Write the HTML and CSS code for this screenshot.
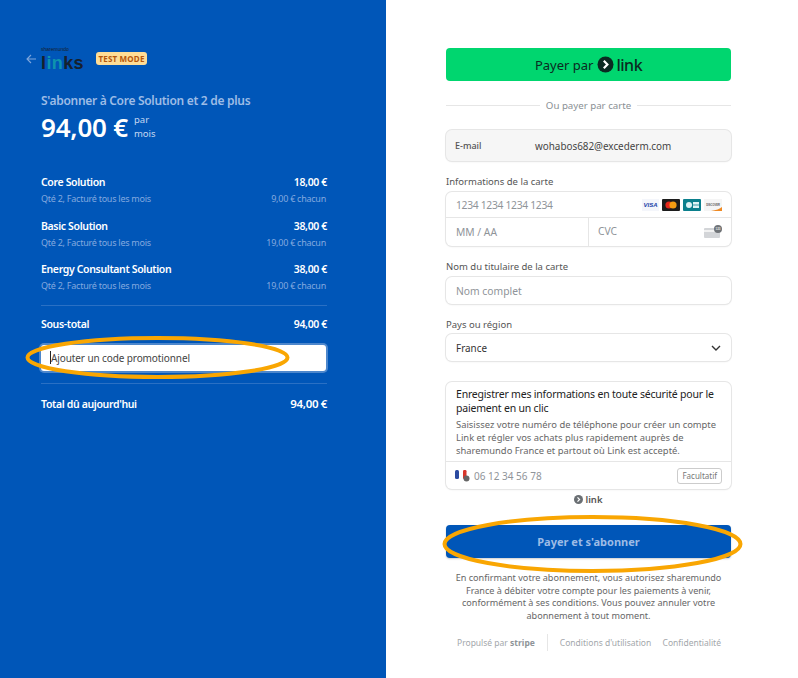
FILE: index.html
```html
<!DOCTYPE html>
<html lang="fr">
<head>
    <meta charset="UTF-8">
    <meta name="viewport" content="width=device-width, initial-scale=1.0">
    <title>S'abonner à Core Solution</title>
    <link rel="stylesheet" href="styles.css">
</head>
<body>

<div class="page">
    <!-- summary -->
    <div class="summary">
        <div class="brand">
            <svg class="back" width="10" height="10" viewBox="0 0 10 10"><path d="M5 1 1 5l4 4M1 5h9" fill="none" stroke="#7fa6dc" stroke-width="1.1"/></svg>
            <div class="logo">
                <span class="logo-top">sharemundo</span>
                <span class="logo-main">l<span class="teal">in</span>ks</span>
            </div>
            <span class="badge">TEST MODE</span>
        </div>

        <div class="plan-title">S'abonner à Core Solution et 2 de plus</div>
        <div class="price">
            <span class="amount">94,00 €</span>
            <span class="period">par<br>mois</span>
        </div>

        <div class="line">
            <div class="line-top"><span>Core Solution</span><span>18,00 €</span></div>
            <div class="line-sub"><span>Qté 2, Facturé tous les mois</span><span>9,00 € chacun</span></div>
        </div>
        <div class="line">
            <div class="line-top"><span>Basic Solution</span><span>38,00 €</span></div>
            <div class="line-sub"><span>Qté 2, Facturé tous les mois</span><span>19,00 € chacun</span></div>
        </div>
        <div class="line">
            <div class="line-top"><span>Energy Consultant Solution</span><span>38,00 €</span></div>
            <div class="line-sub"><span>Qté 2, Facturé tous les mois</span><span>19,00 € chacun</span></div>
        </div>

        <div class="rule rule-a"></div>
        <div class="line-top subtotal"><span>Sous-total</span><span>94,00 €</span></div>
        <div class="promo"><span class="caret"></span>Ajouter un code promotionnel</div>
        <div class="rule rule-b"></div>
        <div class="line-top total"><span>Total dû aujourd'hui</span><span>94,00 €</span></div>
    </div>

    <!-- payment form -->
    <div class="checkout">
        <div class="link-btn">Payer par
            <svg class="link-mark" width="17" height="17" viewBox="0 0 17 17"><circle cx="8.5" cy="8.5" r="8" fill="#0b2a22"/><path d="M6.8 4.8 10.4 8.5 6.8 12.2" fill="none" stroke="#fff" stroke-width="2.2"/></svg>
            <span class="link-word">link</span>
        </div>

        <div class="or"><span>Ou payer par carte</span></div>

        <div class="email">
            <span class="email-label">E-mail</span>
            <span class="email-value">wohabos682@excederm.com</span>
        </div>

        <div class="label label-card">Informations de la carte</div>
        <div class="box card-box">
            <div class="card-row">
                <span class="ph ph-num">1234 1234 1234 1234</span>
                <div class="brands">
                    <svg width="17" height="12" viewBox="0 0 17 12"><rect width="17" height="12" fill="#f4f6fb"/><text x="8.5" y="8.3" text-anchor="middle" class="visa">VISA</text></svg>
                    <svg width="18" height="12" viewBox="0 0 18 12"><rect width="18" height="12" rx="1" fill="#1c1c1c"/><circle cx="7" cy="6" r="3.6" fill="#e4261c"/><circle cx="11" cy="6" r="3.6" fill="#f39c12"/></svg>
                    <svg width="18" height="12" viewBox="0 0 18 12"><rect width="18" height="12" rx="1" fill="#0b7f8c"/><rect x="3" y="3" width="6" height="6" rx="3" fill="#dff3f5"/><rect x="10" y="3" width="6" height="2.6" fill="#dff3f5"/><rect x="10" y="6.4" width="6" height="2.6" fill="#dff3f5"/></svg>
                    <svg width="18" height="12" viewBox="0 0 18 12"><rect width="18" height="12" fill="#f5f5f5"/><text x="9" y="6.5" text-anchor="middle" class="disc">DISCOVER</text><path d="M7 12C12 11 16 10 18 8v4z" fill="#ef8a23"/></svg>
                </div>
            </div>
            <div class="card-row2">
                <div class="exp"><span class="ph">MM / AA</span></div>
                <div class="cvc">
                    <span class="ph">CVC</span>
                    <svg class="cvc-icon" width="18" height="13" viewBox="0 0 18 13"><rect y="3" width="16" height="10" rx="1" fill="#d3d5d8"/><rect y="5" width="16" height="2" fill="#f2f2f2"/><circle cx="14" cy="4" r="4" fill="#6f7377"/><text x="14" y="5.2" text-anchor="middle" class="cvc-num">123</text></svg>
                </div>
            </div>
        </div>

        <div class="label label-name">Nom du titulaire de la carte</div>
        <div class="box field"><span class="ph">Nom complet</span></div>

        <div class="label label-country">Pays ou région</div>
        <div class="box field select">
            <span>France</span>
            <svg width="10" height="6" viewBox="0 0 10 6"><path d="M1 1l4 4 4-4" fill="none" stroke="#333" stroke-width="1.4"/></svg>
        </div>

        <div class="box save">
            <div class="save-body">
                <div class="save-title">Enregistrer mes informations en toute sécurité pour le paiement en un clic</div>
                <div class="save-text">Saisissez votre numéro de téléphone pour créer un compte Link et régler vos achats plus rapidement auprès de sharemundo France et partout où Link est accepté.</div>
            </div>
            <div class="phone">
                <svg width="15" height="13" viewBox="0 0 15 13"><rect y="1" width="4" height="9" rx="1.5" fill="#2b4aa0"/><rect x="4" y="1" width="4" height="9" fill="#fff"/><rect x="8" y="1" width="3.5" height="9" rx="1.2" fill="#d8352a"/><circle cx="11.5" cy="9.5" r="3" fill="#666"/></svg>
                <span class="ph">06 12 34 56 78</span>
                <span class="optional">Facultatif</span>
            </div>
        </div>

        <div class="small-link">
            <svg width="9" height="9" viewBox="0 0 9 9"><circle cx="4.5" cy="4.5" r="4.5" fill="#6a6f73"/><path d="M3.5 2.4 5.6 4.5 3.5 6.6" fill="none" stroke="#fff" stroke-width="1.2"/></svg>link
        </div>

        <div class="pay-btn">Payer et s'abonner</div>

        <p class="legal">En confirmant votre abonnement, vous autorisez sharemundo France à débiter votre compte pour les paiements à venir, conformément à ses conditions. Vous pouvez annuler votre abonnement à tout moment.</p>

        <div class="foot">
            <span class="powered">Propulsé par <b>stripe</b></span>
            <span class="foot-links"><span>Conditions d'utilisation</span><span>Confidentialité</span></span>
        </div>
    </div>
</div>

<!-- hand drawn marks on top of the screenshot -->
<svg class="marks" width="798" height="678" viewBox="0 0 798 678">
    <ellipse cx="157.500" cy="357.500" rx="130" ry="19.500" fill="none" stroke="#f9a602" stroke-width="4"/>
    <ellipse cx="592.500" cy="544" rx="148" ry="27" fill="none" stroke="#f9a602" stroke-width="4"/>
</svg>

</body>
</html>
```

FILE: styles.css
```css
* {
    box-sizing: border-box;
}
body {
    margin: 0;
    font-family: "Noto Sans", "Open Sans", Arial, sans-serif;
    background: #fff;
    overflow: hidden;
}
.page {
    display: flex;
    width: 798px;
    height: 678px;
}
.marks {
    position: absolute;
    left: 0;
    top: 0;
    pointer-events: none;
}

/* left side */
.summary {
    width: 386px;
    height: 678px;
    background: #0056b8;
    padding: 48px 59px 0 41px;
    color: #fff;
}
.brand {
    display: flex;
    align-items: center;
    height: 22px;
    position: relative;
}
.back {
    position: absolute;
    left: -15px;
    top: 6px;
}
.logo {
    width: 43px;
    height: 22px;
    position: relative;
    color: #16202e;
    font-family: "Liberation Sans", Arial, sans-serif;
}
.logo-top {
    position: absolute;
    left: 0;
    top: -1px;
    font-size: 5px;
    line-height: 5px;
    white-space: nowrap;
}
.logo-main {
    position: absolute;
    left: 0;
    top: 7px;
    font-size: 18px;
    line-height: 17px;
    font-weight: 700;
    letter-spacing: 0.4px;
}
.teal {
    color: #0f93ad;
}
.badge {
    margin-left: 12px;
    margin-top: -2px;
    background: #ffdd96;
    color: #b5560b;
    font-size: 8px;
    font-weight: 700;
    line-height: 13px;
    height: 13px;
    width: 51px;
    text-align: center;
    border-radius: 3px;
    letter-spacing: 0.2px;
    white-space: nowrap;
}
.plan-title {
    margin-top: 22px;
    font-size: 12px;
    line-height: 17px;
    font-weight: 600;
    letter-spacing: -0.3px;
    color: #9dbce6;
}
.price {
    display: flex;
    align-items: center;
    margin-top: 0;
    height: 36px;
}
.amount {
    font-size: 26px;
    font-weight: 600;
    line-height: 36px;
    letter-spacing: -0.2px;
}
.period {
    margin-left: 6px;
    font-size: 9.5px;
    line-height: 14px;
    color: #c5d8f2;
}
.line {
    margin-bottom: 10.5px;
}
.price + .line {
    margin-top: 29px;
}
.line-top {
    display: flex;
    justify-content: space-between;
    font-size: 10.5px;
    font-weight: 600;
    line-height: 16px;
    letter-spacing: -0.35px;
}
.line-sub {
    display: flex;
    justify-content: space-between;
    margin-top: 1px;
    padding-right: 1px;
    font-size: 9px;
    line-height: 16px;
    letter-spacing: -0.25px;
    color: #83a9df;
}
.rule {
    height: 1px;
    background: #2a70c4;
}
.rule-a {
    margin-top: 8.5px;
}
.subtotal {
    margin-top: 10px;
}
.promo {
    display: flex;
    align-items: center;
    margin: 13px 1px 0 0;
    height: 26px;
    background: #fff;
    border-radius: 3px;
    box-shadow: 0 0 0 2px #4d87cc;
    color: #444;
    font-size: 10px;
    letter-spacing: -0.1px;
    padding-left: 9px;
}
.caret {
    width: 1px;
    height: 13px;
    background: #222;
}
.rule-b {
    margin-top: 12px;
}
.total {
    margin-top: 12px;
}
.total span:last-child {
    font-size: 11.5px;
}

/* right side */
.checkout {
    width: 285px;
    margin-left: 60px;
    padding-top: 48px;
}
.link-btn {
    display: flex;
    align-items: center;
    justify-content: center;
    height: 33px;
    background: #00d66f;
    border-radius: 4px;
    color: #0b2a22;
    font-size: 13px;
}
.link-mark {
    margin-left: 4px;
}
.link-word {
    margin-left: 2px;
    font-size: 16px;
    font-weight: 500;
    line-height: 20px;
    letter-spacing: -0.5px;
}
.or {
    display: flex;
    align-items: center;
    gap: 6px;
    margin-top: 16px;
    height: 16px;
    font-size: 9.7px;
    color: #8a8f94;
}
.or::before,
.or::after {
    content: "";
    flex: 1;
    height: 1px;
    background: #e6e6e6;
}
.email {
    display: flex;
    align-items: center;
    margin-top: 17px;
    height: 31px;
    background: #f6f6f6;
    border-radius: 6px;
    box-shadow: 0 0 0 1px #e6e6e6, 0 1px 2px rgba(0, 0, 0, 0.08);
    padding-left: 9px;
}
.email-label {
    width: 80px;
    font-size: 9px;
    font-weight: 500;
    color: #555;
}
.email-value {
    font-size: 9.9px;
    color: #444;
}
.label {
    font-size: 9.5px;
    line-height: 14px;
    color: #555;
}
.label-card {
    margin-top: 14px;
    margin-bottom: 3px;
}
.label-name {
    margin-top: 14px;
    margin-bottom: 3px;
}
.label-country {
    margin-top: 14px;
    margin-bottom: 2px;
}
.box {
    background: #fff;
    border-radius: 6px;
    box-shadow: 0 0 0 1px #e6e6e6, 0 1px 2px rgba(0, 0, 0, 0.08);
}
.ph {
    color: #8f9499;
    font-size: 10.3px;
}
.ph-num {
    letter-spacing: -0.3px;
}
.card-box {
    height: 54px;
}
.card-row {
    display: flex;
    align-items: center;
    justify-content: space-between;
    height: 26px;
    padding: 0 9px 0 10px;
    border-bottom: 1px solid #e6e6e6;
}
.brands {
    display: flex;
    gap: 3px;
}
.visa {
    font: italic 700 6px "Liberation Sans", Arial, sans-serif;
    fill: #1a3fa8;
}
.disc {
    font: 700 2.6px "Liberation Sans", Arial, sans-serif;
    fill: #555;
}
.cvc-num {
    font: 700 3px "Liberation Sans", Arial, sans-serif;
    fill: #e8e8e8;
}
.card-row2 {
    display: flex;
    height: 28px;
}
.exp {
    display: flex;
    align-items: center;
    width: 143px;
    padding-left: 10px;
    border-right: 1px solid #e6e6e6;
}
.cvc {
    display: flex;
    align-items: center;
    justify-content: space-between;
    flex: 1;
    padding: 0 9px 2px 9px;
}
.field {
    display: flex;
    align-items: center;
    height: 27px;
    padding: 0 10px;
}
.select {
    justify-content: space-between;
    font-size: 9.9px;
    color: #333;
}
.save {
    margin-top: 21px;
    height: 107px;
}
.save-body {
    height: 80px;
    padding: 5px 10px 0;
    border-bottom: 1px solid #e6e6e6;
}
.save-title {
    font-size: 10.5px;
    line-height: 14px;
    letter-spacing: -0.2px;
    color: #222;
}
.save-text {
    margin-top: 3px;
    font-size: 9.4px;
    line-height: 13px;
    color: #666;
}
.phone {
    display: flex;
    align-items: center;
    height: 27px;
    padding: 0 9px 0 9px;
}
.phone .ph {
    margin-left: 4px;
    font-size: 10px;
    flex: 1;
}
.optional {
    border: 1px solid #ccc;
    border-radius: 3px;
    padding: 0 4px;
    font-size: 8px;
    line-height: 14px;
    color: #777;
}
.small-link {
    display: flex;
    align-items: center;
    justify-content: center;
    gap: 2px;
    margin-top: 4px;
    height: 12px;
    font-size: 9.5px;
    font-weight: 600;
    color: #555;
}
.pay-btn {
    margin-top: 20px;
    height: 33px;
    background: #0056b8;
    border-radius: 4px;
    color: #9dbce6;
    font-size: 11px;
    font-weight: 700;
    line-height: 33px;
    text-align: center;
    box-shadow: 0 1px 2px rgba(0, 0, 0, 0.2);
}
.legal {
    margin: 14px 0 0;
    font-size: 9.1px;
    line-height: 12.700px;
    color: #666;
    text-align: center;
}
.foot {
    display: flex;
    align-items: center;
    margin-top: 11px;
    height: 17px;
    padding-left: 11px;
    font-size: 8.500px;
    color: #a3a7ab;
}
.powered {
    padding-right: 12px;
    border-right: 1px solid #e6e6e6;
    line-height: 17px;
}
.powered b {
    color: #8f9499;
}
.foot-links {
    display: flex;
    justify-content: space-between;
    flex: 1;
    padding: 0 10px 0 12px;
}
```
